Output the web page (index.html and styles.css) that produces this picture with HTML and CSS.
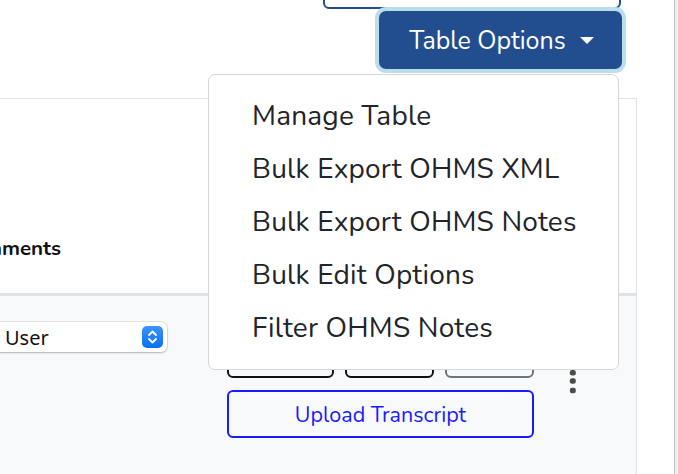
FILE: index.html
```html
<!DOCTYPE html>
<html lang="en">
<head>
<meta charset="utf-8">
<title>Table Options</title>
<link rel="stylesheet" href="styles.css">
</head>
<body>
<div class="page">
  <div class="viewport">
    <div class="toolbar">
      <button class="btn-outline-top" type="button" aria-label="Add Item"></button>
      <div class="dropdown">
        <button class="btn-primary" type="button">Table Options <span class="caret"></span></button>
        <ul class="dropdown-menu">
          <li class="dropdown-item">Manage Table</li>
          <li class="dropdown-item">Bulk Export OHMS XML</li>
          <li class="dropdown-item">Bulk Export OHMS Notes</li>
          <li class="dropdown-item">Bulk Edit Options</li>
          <li class="dropdown-item">Filter OHMS Notes</li>
        </ul>
      </div>
    </div>
    <div class="panel">
      <div class="thead">
        <div class="th th-first">Comments</div>
        <div class="th"></div>
        <div class="th"></div>
      </div>
      <div class="tbody">
        <div class="td td-first">
          <div class="select">
            <span class="select-text">User</span>
            <span class="stepper">
              <svg width="21" height="22" viewBox="0 0 21 22" aria-hidden="true">
                <path d="M7 9 L10.5 5.5 L14 9" fill="none" stroke="#fff" stroke-width="1.8" stroke-linecap="round" stroke-linejoin="round"/>
                <path d="M7 13 L10.5 16.5 L14 13" fill="none" stroke="#fff" stroke-width="1.8" stroke-linecap="round" stroke-linejoin="round"/>
              </svg>
            </span>
          </div>
        </div>
        <div class="td td-actions">
          <div class="btn-row">
            <button class="btn-sm btn-dark-outline b1" type="button" aria-label="Edit"></button>
            <button class="btn-sm btn-dark-outline b2" type="button" aria-label="View"></button>
            <button class="btn-sm btn-grey-outline b3" type="button" aria-label="Delete"></button>
          </div>
          <button class="btn-upload" type="button">Upload Transcript</button>
        </div>
        <div class="td td-kebab">
          <svg width="8" height="24" viewBox="0 0 8 24" aria-hidden="true">
            <rect x="0.8" y="0" width="6" height="5.5" rx="2.2" fill="#4a4a4a"/>
            <rect x="0.8" y="8.3" width="6" height="5.5" rx="2.2" fill="#4a4a4a"/>
            <rect x="0.8" y="17.7" width="6" height="5.5" rx="2.2" fill="#4a4a4a"/>
          </svg>
        </div>
      </div>
    </div>
  </div>
  <div class="scrollbar"></div>
</div>
</body>
</html>
```

FILE: styles.css
```css
* { box-sizing: border-box; }

html, body {
  margin: 0;
  padding: 0;
  background: #fff;
  overflow: hidden;
}

body {
  font-family: "Nunito", "Lato", "Noto Sans", sans-serif;
  color: #212529;
}

.page {
  display: flex;
  width: 678px;
  height: 474px;
}

.viewport {
  width: 674px;
  height: 474px;
  overflow: hidden;
  display: flex;
  flex-direction: column;
}

.scrollbar {
  width: 4px;
  height: 474px;
  background: #efefef;
  border-left: 1px solid #c2c2c2;
}

/* toolbar */
.toolbar {
  height: 98px;
  flex: none;
  display: flex;
  flex-direction: column;
  align-items: flex-end;
  padding-right: 52px;
}

.btn-outline-top {
  width: 298px;
  height: 40px;
  margin-top: -31px;
  margin-right: 1px;
  border: 2px solid #224e8f;
  border-radius: 6px;
  background: #fff;
}

.dropdown {
  position: relative;
  margin-top: 2px;
}

.btn-primary {
  width: 243px;
  height: 58px;
  border: none;
  border-radius: 7px;
  background: #224e8f;
  color: #fff;
  font-family: inherit;
  font-size: 25px;
  box-shadow: 0 0 0 4px #bcdeeb;
  display: flex;
  align-items: center;
  justify-content: center;
  gap: 14px;
  padding: 1px 0 0 2px;
}

.caret {
  width: 0;
  height: 0;
  border-left: 7px solid transparent;
  border-right: 7px solid transparent;
  border-top: 7px solid #fff;
  margin-top: 0;
}

.dropdown-menu {
  position: absolute;
  z-index: 10;
  top: 63px;
  right: 3px;
  width: 411px;
  margin: 0;
  padding: 14px 0 15px;
  list-style: none;
  background: #fff;
  border: 1px solid #d6d6d6;
  border-radius: 7px;
}

.dropdown-item {
  height: 53px;
  display: flex;
  align-items: center;
  padding-left: 43px;
  font-size: 28px;
  letter-spacing: 0.2px;
  color: #212529;
  white-space: nowrap;
}

/* panel / table */
.panel {
  margin-left: -140px;
  width: 777px;
  flex: 1;
  display: flex;
  flex-direction: column;
  border-top: 1px solid #dde2e8;
  border-right: 1px solid #dee2e6;
}

.thead {
  height: 197px;
  flex: none;
  display: grid;
  grid-template-columns: 350px 357px 1fr;
  border-bottom: 3px solid #dee2e6;
  background: #fff;
}

.th {
  display: flex;
  align-items: flex-end;
  padding-bottom: 31px;
  font-weight: 700;
  font-size: 20.5px;
  color: #111;
}

.th-first {
  padding-left: 99px;
}

.tbody {
  flex: 1;
  display: grid;
  grid-template-columns: 350px 357px 1fr;
  background: #f8f9fa;
}

.td-first {
  padding: 26px 0 0 7px;
}

.select {
  width: 300px;
  height: 30px;
  background: #fff;
  border-radius: 6px;
  box-shadow: 0 0 0 1px rgba(0,0,0,0.08), 0 1px 2px rgba(0,0,0,0.22);
  display: flex;
  align-items: center;
  justify-content: space-between;
  padding: 0 4px 0 138px;
}

.select-text {
  font-size: 20px;
  color: #111;
  font-family: "Noto Sans", "Lato", sans-serif;
}

.stepper {
  display: flex;
  width: 21px;
  height: 22px;
  border-radius: 5px;
  background: linear-gradient(#3a95ff, #0a6ff0);
}

.td-actions {
  padding: 44px 0 0 17px;
  display: flex;
  flex-direction: column;
  align-items: flex-start;
  gap: 12px;
}

.btn-row {
  display: flex;
  gap: 11px;
}

.btn-sm {
  height: 38px;
  border-radius: 6px;
  background: transparent;
}

.b1 { width: 107px; }
.b2 { width: 89px; }
.b3 { width: 89px; }

.btn-dark-outline { border: 2px solid #111; }
.btn-grey-outline { border: 2px solid #6c757d; }

.btn-upload {
  width: 307px;
  height: 48px;
  border: 2px solid #1a1aff;
  border-radius: 6px;
  background: transparent;
  color: #1a1aff;
  font-family: inherit;
  font-size: 21.5px;
  padding: 2px 0 0;
}

.td-kebab {
  padding: 74px 0 0 2px;
}
```
